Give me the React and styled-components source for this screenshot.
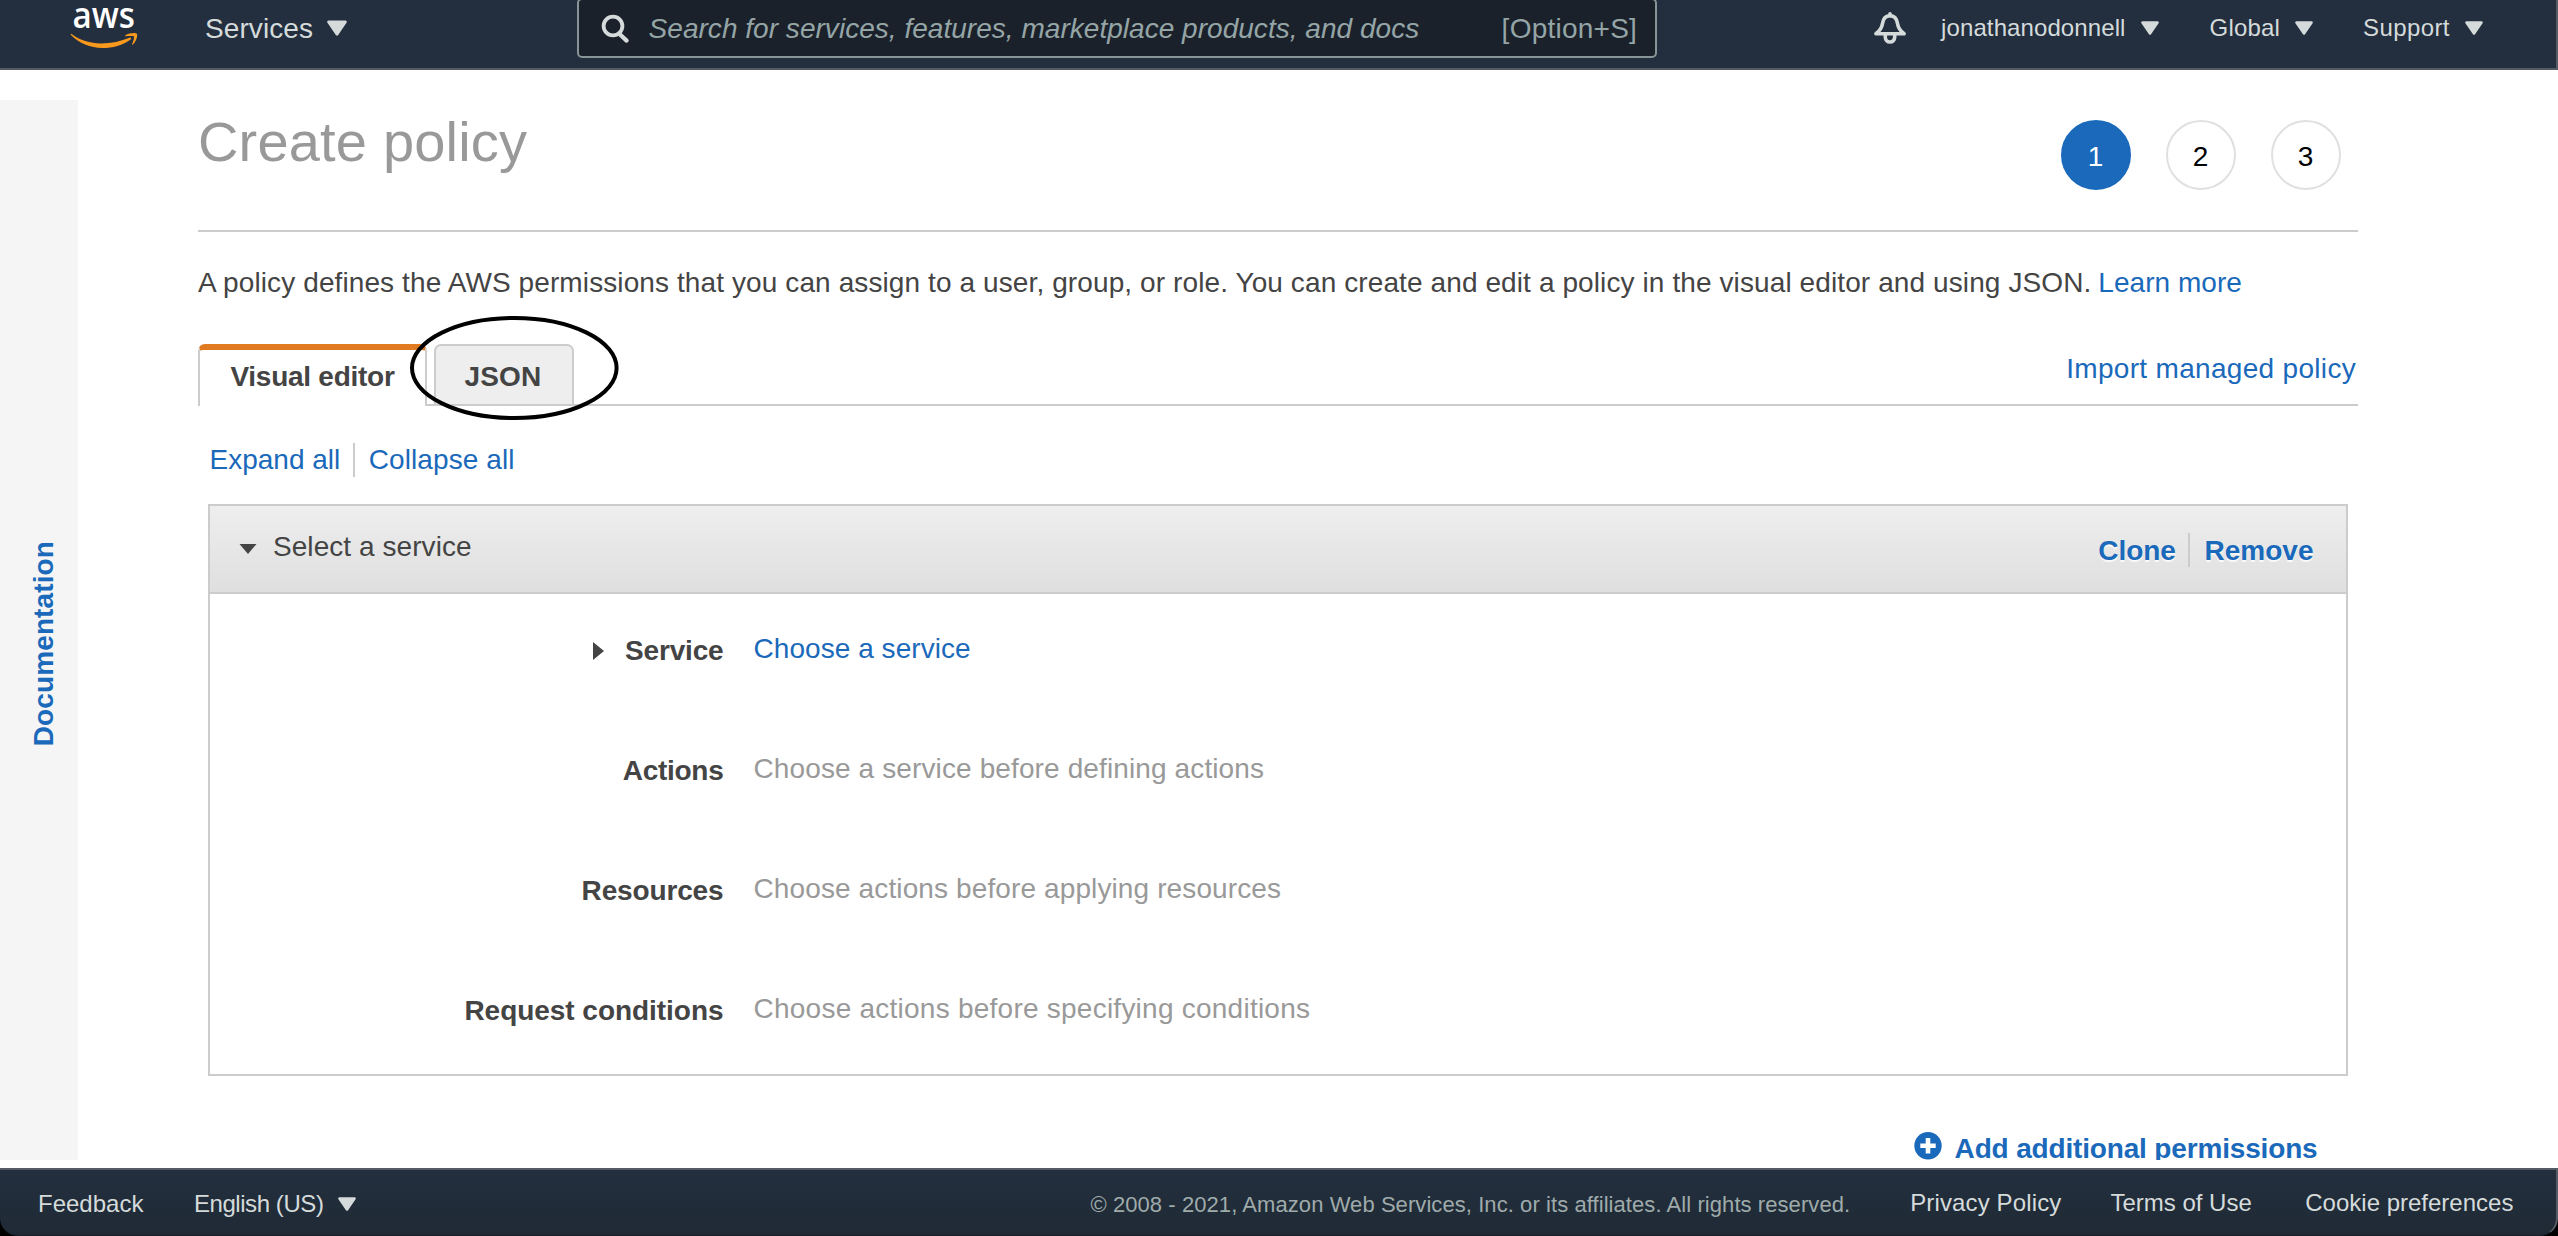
import React from "react";
import styled, { createGlobalStyle, css } from "styled-components";

const color = {
  nav: "#232f3e",
  navBorder: "#545b64",
  navText: "#d5dbdb",
  muted: "#95a5a6",
  link: "#1a69ba",
  text: "#444444",
  gray: "#999999",
  line: "#cccccc",
};

const GlobalStyle = createGlobalStyle`
  * { box-sizing: border-box; }
  body {
    margin: 0;
    background: #000;
    font-family: "Liberation Sans", Arial, Helvetica, sans-serif;
    overflow: hidden;
  }
`;

const Page = styled.div`
  display: flex;
  flex-direction: column;
  width: 2558px;
  height: 1236px;
`;

const Label = styled.span`
  flex: none;
  white-space: nowrap;
  font-size: ${(p) => p.$size || 28}px;
  line-height: ${(p) => ({ 22: 25, 24: 27, 28: 31 })[p.$size || 28]}px;
  font-weight: ${(p) => (p.$bold ? 700 : 400)};
  color: ${(p) => p.$color || color.text};
  letter-spacing: ${(p) => p.$track || 0}px;
  margin-top: ${(p) => p.$top || 0}px;
`;

const Link = styled(Label).attrs({ as: "a" })`
  color: ${color.link};
  text-decoration: none;
`;

/* ---------- top navigation ---------- */

const TopNav = styled.header`
  display: flex;
  align-items: flex-start;
  height: 70px;
  padding-left: 70px;
  background: ${color.nav};
  border-bottom: 2px solid ${color.navBorder};
  border-right: 2px solid ${color.navBorder};
`;

const Logo = styled.svg`
  flex: none;
  width: 70px;
  height: 50px;
  overflow: visible;
`;

const NavMenu = styled.div`
  flex: none;
  display: flex;
  align-items: flex-start;
  gap: ${(p) => p.$gap || 15}px;
  margin-left: ${(p) => p.$ml}px;
`;

const Caret = styled.svg`
  flex: none;
  width: ${(p) => p.$w || 18}px;
  height: ${(p) => p.$h || 14}px;
  margin-top: ${(p) => p.$top}px;
`;

const SearchBox = styled.div`
  flex: none;
  display: flex;
  align-items: flex-start;
  width: 1080px;
  height: 60px;
  margin: -2px 0 0 230px;
  padding: 0 18px 0 21px;
  background: #1a212b;
  border: 2px solid #879596;
  border-radius: 5px;
`;

const SearchGlyph = styled.svg`
  flex: none;
  width: 32px;
  height: 32px;
  margin-top: 12px;
`;

const Placeholder = styled(Label)`
  flex: 1;
  margin-left: 16.5px;
  font-style: italic;
`;

const Bell = styled.svg`
  flex: none;
  width: 36px;
  height: 36px;
  margin: 10px 0 0 215px;
`;

/* ---------- workspace ---------- */

const Workspace = styled.main`
  display: flex;
  height: 1098px;
  padding: 30px 0 8px;
  background: #fff;
`;

const DocRail = styled.aside`
  flex: none;
  width: 78px;
  height: 1060px;
  padding: 441px 0 0 28px;
  background: #f5f5f5;
`;

const DocLabel = styled(Link)`
  display: block;
  writing-mode: vertical-rl;
  transform: rotate(180deg);
  width: 31px;
`;

const Content = styled.section`
  flex: none;
  width: 2160px;
  height: 1060px;
  margin-left: 120px;
  overflow: hidden;
`;

const Heading = styled.div`
  display: flex;
  justify-content: space-between;
  align-items: flex-start;
  height: 132px;
  padding-right: 17px;
  border-bottom: 2px solid ${color.line};
`;

const Title = styled.h1`
  margin: 10px 0 0;
  font-size: 56px;
  line-height: 63px;
  font-weight: 400;
  letter-spacing: 0.18px;
  color: ${color.gray};
`;

const Steps = styled.ol`
  display: flex;
  gap: 35px;
  margin: 20px 0 0;
  padding: 0;
  list-style: none;
`;

const Step = styled.li`
  width: 70px;
  height: 70px;
  padding: 19px 1px 0 0;
  border: 2px solid ${(p) => (p.$active ? color.link : "#e0e0e0")};
  border-radius: 50%;
  background: ${(p) => (p.$active ? color.link : "#fff")};
  color: ${(p) => (p.$active ? "#fff" : "#000")};
  font-size: 28px;
  line-height: 31px;
  text-align: center;
`;

const Intro = styled.p`
  display: flex;
  gap: 7px;
  margin: 35px 0 0;
`;

const TabBar = styled.div`
  position: relative;
  display: flex;
  align-items: flex-start;
  height: 62px;
  margin-top: 46px;
  box-shadow: inset 0 -2px ${color.line};
`;

const Tab = styled.div`
  display: flex;
  justify-content: center;
  height: 62px;
  border: 2px solid ${color.line};
  border-radius: 7px 7px 0 0;
  ${(p) =>
    p.$active
      ? css`
          width: 229px;
          padding-top: 11px;
          background: #fff;
          border-top: 6px solid #e07b22;
          border-bottom: 0;
        `
      : css`
          width: 140px;
          margin-left: 7px;
          padding: 15px 2px 0 0;
          background: #eee;
        `}
`;

const ImportLink = styled(Link)`
  margin: 9px 2px 0 auto;
`;

const Marker = styled.svg`
  position: absolute;
  left: 211px;
  top: -29px;
  width: 211px;
  height: 106px;
  pointer-events: none;
`;

const Divided = styled.div`
  display: flex;
  align-items: flex-start;
  height: 34px;
`;

const Divider = styled.i`
  flex: none;
  width: 2px;
  height: 34px;
  margin: 0 14px 0 12.5px;
  background: ${color.line};
`;

const ExpandRow = styled(Divided)`
  margin: 37px 0 0 11.5px;
`;

const Panel = styled.div`
  margin: 27px 10px 0;
  border: 2px solid ${color.line};
`;

const PanelHeader = styled.div`
  display: flex;
  align-items: flex-start;
  height: 88px;
  padding: 0 32.5px 0 29px;
  background: linear-gradient(#eeeeee, #dfdfdf);
  border-bottom: 2px solid ${color.line};
`;

const PanelTitle = styled(Label)`
  margin: 25px auto 0 16px;
`;

const PanelActions = styled(Divided)`
  margin-top: 27px;
  text-shadow: 0 2px 0 rgba(255, 255, 255, 0.8);
`;

const Field = styled.div`
  display: grid;
  grid-template-columns: 513.5px auto;
  column-gap: 30px;
  height: 120px;
  padding-top: 39px;
`;

const FieldName = styled.div`
  display: flex;
  justify-content: flex-end;
  align-items: flex-start;
  gap: 21px;
  padding-top: 2px;
`;

const AddRow = styled.div`
  display: flex;
  justify-content: flex-end;
  align-items: flex-start;
  gap: 13px;
  margin-top: 56px;
  padding-right: 40.5px;
`;

const PlusIcon = styled.svg`
  flex: none;
  width: 28px;
  height: 28px;
`;

/* ---------- footer ---------- */

const Footer = styled.footer`
  display: flex;
  align-items: flex-start;
  height: 68px;
  padding-left: 38px;
  background: linear-gradient(#232f3e, #1f2a35);
  border-top: 2px solid ${color.navBorder};
  border-right: 2px solid ${color.navBorder};
  border-bottom: 1px solid #17202a;
  border-radius: 0 0 18px 18px;
`;

const Copyright = styled(Label)`
  margin: 22px 0 0 734px;
`;

const FooterLink = styled(Label)`
  margin: 19px 0 0 ${(p) => p.$ml}px;
`;

const DownCaret = ({ w = 18, h = 14, top }) => (
  <Caret $w={w} $h={h} $top={top} viewBox="0 0 18 14">
    <path d="M1.5 1.5h15L9 12.5z" fill={color.navText} stroke={color.navText} strokeWidth="2.6" strokeLinejoin="round" />
  </Caret>
);

const menus = [
  { name: "jonathanodonnell", track: 0.1, ml: 33 },
  { name: "Global", track: 0.19, ml: 51 },
  { name: "Support", track: 0.4, ml: 50 },
];

const fields = [
  { name: "Service", track: -0.18, hint: "Choose a service", hintTrack: 0.05, link: true },
  { name: "Actions", track: -0.27, hint: "Choose a service before defining actions", hintTrack: 0.119 },
  { name: "Resources", track: -0.14, hint: "Choose actions before applying resources", hintTrack: 0.116 },
  { name: "Request conditions", track: -0.04, hint: "Choose actions before specifying conditions", hintTrack: 0.242 },
];

export default function App() {
  return (
    <>
      <GlobalStyle />
      <Page>
        <TopNav>
          <Logo viewBox="70 0 70 50">
            <text x="72.5" y="28.3" fill="#fff" fontFamily="Open Sans, Noto Sans, sans-serif" fontWeight="600" fontSize="36" textLength="62.5" lengthAdjust="spacingAndGlyphs">
              aws
            </text>
            <path d="M71.6 34C80 40.3 90 43.4 101 43.4c10.5 0 20-2.2 28.5-5.700 1.3-.5 2.3.8 1.1 1.700C123 45.2 112.500 48 102.500 48 90 48 79.200 43.200 71 35.100c-.6-.7 0-1.600.6-1.100z" fill="#f8991d" />
            <path d="M125.500 35.200c3-2.300 10.300-2.900 11.400-1.500 1 1.400-.4 7.600-4 10.900-.5.4-1 .2-.8-.4.9-2.100 2.500-6.700 1.800-7.600-.8-.9-5.200-.6-8-.4-.8 0-1-.6-.4-1z" fill="#f8991d" />
          </Logo>
          <NavMenu $ml={65} $gap={14}>
            <Label $color={color.navText} $track={0.09} $top={13}>Services</Label>
            <DownCaret w={20} h={16} top={20} />
          </NavMenu>
          <SearchBox>
            <SearchGlyph viewBox="600 12 32 32" fill="none" stroke={color.navText} strokeWidth="3.8">
              <circle cx="613" cy="26" r="9.4" />
              <path d="M619 33.500L626.600 40.600" strokeWidth="4.200" strokeLinecap="round" />
            </SearchGlyph>
            <Placeholder $color={color.muted} $track={0.03} $top={13}>
              Search for services, features, marketplace products, and docs
            </Placeholder>
            <Label $color={color.muted} $track={0.24} $top={13}>[Option+S]</Label>
          </SearchBox>
          <Bell viewBox="1872 10 36 36" fill="none" stroke={color.navText} strokeWidth="3.600" strokeLinejoin="round" strokeLinecap="round">
            <path d="M1890 13.800v2" />
            <path d="M1875.900 33.800c4-3 6-6.300 6.600-10.300.8-5.300 3.300-7.700 7.500-7.700s6.700 2.400 7.500 7.700c.6 4 2.600 7.300 6.600 10.300z" />
            <path d="M1885.300 35v2.300a4.700 4.700 0 0 0 9.400 0V35" />
          </Bell>
          {menus.map((m) => (
            <NavMenu key={m.name} $ml={m.ml}>
              <Label $size={24} $color={color.navText} $track={m.track} $top={14}>{m.name}</Label>
              <DownCaret top={21} />
            </NavMenu>
          ))}
        </TopNav>

        <Workspace>
          <DocRail>
            <DocLabel $bold $track={0.11}>Documentation</DocLabel>
          </DocRail>
          <Content>
            <Heading>
              <Title>Create policy</Title>
              <Steps>
                <Step $active>1</Step>
                <Step>2</Step>
                <Step>3</Step>
              </Steps>
            </Heading>
            <Intro>
              <Label $track={0.103}>
                A policy defines the AWS permissions that you can assign to a user, group, or role. You can create and edit a policy in the visual editor and using JSON.
              </Label>
              <Link $track={0.04}>Learn more</Link>
            </Intro>
            <TabBar>
              <Tab $active>
                <Label $bold $track={-0.26}>Visual editor</Label>
              </Tab>
              <Tab>
                <Label $bold $track={0.16}>JSON</Label>
              </Tab>
              <ImportLink $track={0.31}>Import managed policy</ImportLink>
              <Marker viewBox="0 0 211 106">
                <ellipse cx="105.300" cy="53" rx="102.300" ry="50" fill="none" stroke="#000" strokeWidth="4" />
              </Marker>
            </TabBar>
            <ExpandRow>
              <Link $top={1}>Expand all</Link>
              <Divider />
              <Link $top={1} $track={0.09}>Collapse all</Link>
            </ExpandRow>
            <Panel>
              <PanelHeader>
                <Caret $w={18} $h={10} $top={38} viewBox="0 0 18 10">
                  <path d="M.5 0h17L9 10z" fill={color.text} />
                </Caret>
                <PanelTitle $track={0.06}>Select a service</PanelTitle>
                <PanelActions>
                  <Link $bold $top={2} $track={-0.05}>Clone</Link>
                  <Divider />
                  <Link $bold $top={2} $track={0.03}>Remove</Link>
                </PanelActions>
              </PanelHeader>
              {fields.map((f) => (
                <Field key={f.name}>
                  <FieldName>
                    {f.link && (
                      <Caret $w={11} $h={18} $top={7} viewBox="0 0 11 18">
                        <path d="M0 0l11 9L0 18z" fill={color.text} />
                      </Caret>
                    )}
                    <Label $bold $track={f.track}>{f.name}</Label>
                  </FieldName>
                  {f.link ? (
                    <Link $track={f.hintTrack}>{f.hint}</Link>
                  ) : (
                    <Label $color={color.gray} $track={f.hintTrack}>{f.hint}</Label>
                  )}
                </Field>
              ))}
            </Panel>
            <AddRow>
              <PlusIcon viewBox="0 0 28 28">
                <circle cx="14" cy="13.700" r="13.700" fill={color.link} />
                <path d="M14 6v15.400M6.300 13.700h15.400" stroke="#fff" strokeWidth="4.600" />
              </PlusIcon>
              <Link $bold $top={1} $track={-0.163}>Add additional permissions</Link>
            </AddRow>
          </Content>
        </Workspace>

        <Footer>
          <Label $size={24} $color={color.navText} $top={20}>Feedback</Label>
          <NavMenu $ml={50.5}>
            <Label $size={24} $color={color.navText} $track={-0.43} $top={20}>English (US)</Label>
            <DownCaret top={27} />
          </NavMenu>
          <Copyright $size={22} $color="#9fabab" $track={0.072}>
            © 2008 - 2021, Amazon Web Services, Inc. or its affiliates. All rights reserved.
          </Copyright>
          <FooterLink $size={24} $color={color.navText} $track={0.13} $ml={60}>Privacy Policy</FooterLink>
          <FooterLink $size={24} $color={color.navText} $ml={49}>Terms of Use</FooterLink>
          <FooterLink $size={24} $color={color.navText} $ml={53.5}>Cookie preferences</FooterLink>
        </Footer>
      </Page>
    </>
  );
}
